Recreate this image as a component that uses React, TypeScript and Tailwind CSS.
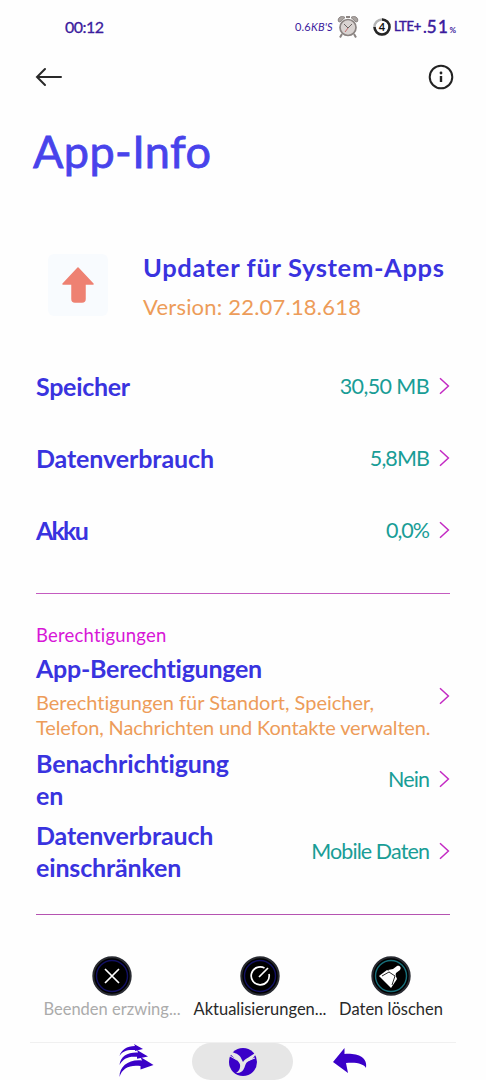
import React from 'react';

interface RowProps {
  title: string;
  value: string;
  titleClass?: string;
  valueClass?: string;
}

// small magenta chevron on the right side of every row
function Chevron() {
  return (
    <svg className="h-[18px] w-[11px] shrink-0" viewBox="0 0 11 18" fill="none" stroke="#c32ac3" strokeWidth="1.5">
      <path d="M1 1.2 9.4 9 1 16.8" />
    </svg>
  );
}

function Row({ title, value, titleClass = '', valueClass = '' }: RowProps) {
  return (
    <div className="flex h-[72px] items-center justify-between">
      <div className={`w-[201px] text-[25px] leading-8 font-bold wrap-break-word text-[#3933df] ${titleClass}`}>{title}</div>
      <div className="flex items-center gap-2.5">
        <div className={`text-[21.5px] leading-8 whitespace-nowrap text-[#199d96] ${valueClass}`}>{value}</div>
        <Chevron />
      </div>
    </div>
  );
}

function AlarmIcon() {
  return (
    <svg className="h-[24px] w-[22px]" viewBox="0 0 22 24" fill="none" stroke="#8b8482">
      <path d="M1.5 6.5C0 2.5 5 0 8 2.5L3 7ZM20.5 6.5C22 2.5 17 0 14 2.5L19 7Z" fill="#aaa4a1" />
      <path d="M5 19 3 22.5M17 19 19 22.5M9 2h4" strokeWidth="2" />
      <circle cx="11" cy="12.5" r="8" fill="#d9d3d1" strokeWidth="1.7" />
      <path d="m7 9 4 4 4-4" stroke="#6b6463" />
      <path d="m11 13-3 4" stroke="#c46c6c" />
    </svg>
  );
}

function StatusBar() {
  return (
    <div className="flex h-[54px] items-center text-[#3b1b9d]">
      <div className="w-[229px] pl-[35px] text-[16px] tracking-[-0.5px] [-webkit-text-stroke:0.3px]">00:12</div>
      <div className="flex w-[42px] items-center pl-9 text-[11px] tracking-[0.2px] whitespace-nowrap">
        0.6<span className="italic">KB'S</span>
      </div>
      <div className="ml-[36px] flex">
        <AlarmIcon />
      </div>
      <svg className="ml-[14px] h-[18px] w-[18px]" viewBox="0 0 18 18" fill="none">
        <circle cx="9" cy="9" r="7.5" stroke="#b4b4b4" strokeWidth="2.5" />
        <path d="M9 1.5A7.5 7.5 0 1 1 1.5 9" stroke="#252525" strokeWidth="2.5" />
        <text x="9" y="13" textAnchor="middle" fill="#111" fontSize="11" fontWeight="bold">4</text>
      </svg>
      <div className="ml-[3px] text-[13px] tracking-[-0.3px] whitespace-nowrap [-webkit-text-stroke:0.5px]">LTE+</div>
      <div className="ml-[2px] flex items-baseline whitespace-nowrap">
        <span className="text-[16px] font-bold">.</span>
        <span className="text-[17px] tracking-[1.5px] [-webkit-text-stroke:0.5px]">51</span>
        <span className="text-[8px] font-bold">%</span>
      </div>
    </div>
  );
}

interface ActionProps {
  label: string;
  className: string;
  ring: string;
  children: React.ReactNode;
}

function Action({ label, className, ring, children }: ActionProps) {
  return (
    <div className={`flex flex-col items-center ${className}`}>
      <svg className="h-10 w-10" viewBox="0 0 40 40" fill="none" stroke="#fff" strokeWidth="1.7">
        <circle cx="20" cy="20" r="18.7" fill="#000" stroke="#292b32" strokeWidth="2" />
        <circle cx="20" cy="20" r="15.5" stroke={ring} strokeWidth="1.4" />
        {children}
      </svg>
      <div className="mt-px text-[16.5px] leading-6 whitespace-nowrap">{label}</div>
    </div>
  );
}

function NavBar() {
  return (
    <div className="mx-[30px] flex h-[38px] border-t border-[#f0f0f0]">
      <svg className="mt-px ml-[88px] h-9 w-9" viewBox="0 0 36 36" fill="#3a00c8">
        <path d="M1.5 12C3 6 9 2 17 2L16 0l9 5-8 2V6C9 5.500 4.500 7 1.500 12Z" />
        <path d="M1.5 21C2.500 12 10 8 20 8.500L19 6l11 6.500-11 2.300v-2C10 12 5 14.500 1.500 21Z" />
        <path d="M1.5 33C1.500 22 11 15 24 16.500L22.500 13 35.500 21l-13 4.500v-3.500C12 20.500 4 24 1.500 33Z" />
      </svg>
      <div className="ml-[38px] flex h-[37px] w-[101px] items-center justify-center rounded-full bg-[#e6e6e6]">
        <svg className="h-[30px] w-[30px]" viewBox="0 0 30 30">
          <circle cx="15" cy="15" r="14" fill="#3a00c8" />
          <path d="M0 3.500C5 6 10 6 12.500 10l2.500 5c2-4 8-5 13-10-1 5-4 8-8 9.500-3 1.500-2.500 5-4.500 8-1.500 2.500-4 4-7.500 3.500 3.500-2 4.500-5.500 4-8.500C11 13 4 11 0 3.500Z" fill="#e6e6e6" />
          <path d="m2 9 7 4M19 14l8-3" stroke="#e6e6e6" strokeWidth="1" />
        </svg>
      </div>
      <svg className="mt-[5px] ml-[39px] h-[26px] w-9" viewBox="0 0 36 26" fill="#3a00c8">
        <path d="M1 14 12.500 0v6C25 5 36 9 34 20c-2-4-9-6-20-5l2 10Z" />
      </svg>
    </div>
  );
}

export default function App() {
  return (
    <div className="h-[1080px] w-[486px] overflow-hidden bg-[#fefefe] font-['Lato','Noto_Sans',sans-serif] [font-variant-ligatures:none]">
      <div className="px-[30px]">
        <StatusBar />
      </div>
      <div className="flex h-[45px] items-center justify-between pr-8 pl-[35px]">
        <svg className="h-[20px] w-[28px]" viewBox="0 0 28 20" fill="none" stroke="#292929" strokeWidth="2" strokeLinecap="round">
          <path d="M26 10H2M10 2 2 10l8 8" />
        </svg>
        <svg className="h-[26px] w-[26px]" viewBox="0 0 26 26" fill="none" stroke="#222">
          <circle cx="13" cy="13" r="11.3" strokeWidth="2" />
          <path d="M13 12v6" strokeWidth="2.4" />
          <circle cx="13" cy="9" r="1.4" fill="#222" stroke="none" />
        </svg>
      </div>
      <h1 className="h-[155px] pt-[25px] pl-[33px] text-[45px] leading-[54px] tracking-[0.4px] text-[#4843eb] [-webkit-text-stroke:0.8px]">App-Info</h1>

      <div className="flex h-[96px] pl-12">
        <div className="flex h-[62px] w-[60px] items-center justify-center rounded-md bg-[#f8fbfe]">
          <svg className="h-9 w-8" viewBox="0 0 32 36" fill="#ee8172" stroke="#ee8172" strokeWidth="1.5" strokeLinejoin="round">
            <path d="M16 1 31 17H23V32q0 3-3 3h-7q-3 0-3-3V17H1Z" />
          </svg>
        </div>
        <div className="-mt-[5px] ml-[35px]">
          <div className="text-[25.5px] leading-9 font-bold tracking-[0.65px] whitespace-nowrap text-[#3933df]">Updater für System-Apps</div>
          <div className="mt-1 text-[22px] leading-9 tracking-[0.2px] whitespace-nowrap text-[#ed9c59]">Version: 22.07.18.618</div>
        </div>
      </div>

      <div className="mx-9">
        <Row title="Speicher" value="30,50 MB" titleClass="tracking-[-0.3px]" valueClass="tracking-[-0.6px]" />
        <Row title="Datenverbrauch" value="5,8MB" titleClass="tracking-[-0.1px]" valueClass="tracking-[-0.9px]" />
        <Row title="Akku" value="0,0%" titleClass="tracking-[-1.8px]" valueClass="tracking-[-1px]" />
        <div className="mt-[27px] h-px bg-[#c45bc0]" />
        <div className="mt-[27px] text-[18.5px] leading-7 tracking-[0.2px] text-[#d716d7]">Berechtigungen</div>
        <div className="flex h-[94px] items-center justify-between">
          <div className="w-[403px] pb-[3px]">
            <div className="text-[25px] leading-9 font-bold tracking-[-0.25px] text-[#3933df]">App-Berechtigungen</div>
            <div className="mt-1 text-[20px] leading-[25px] whitespace-nowrap text-[#ed9c59]">
              <div>Berechtigungen für Standort, Speicher,</div>
              <div className="tracking-[-0.15px]">Telefon, Nachrichten und Kontakte verwalten.</div>
            </div>
          </div>
          <Chevron />
        </div>
        <Row title="Benachrichtigungen" value="Nein" titleClass="tracking-[-0.1px]" valueClass="tracking-[-0.9px]" />
        <Row title="Datenverbrauch einschränken" value="Mobile Daten" titleClass="tracking-[-0.15px]" valueClass="tracking-[-0.9px]" />
        <div className="mt-[27px] h-px bg-[#b553b1]" />
      </div>

      <div className="mt-[41px] flex h-[86px] pl-[38px]">
        <Action label="Beenden erzwing..." className="w-[148px] text-[#ababab]" ring="#121063">
          <path d="m13 13 14 14M27 13 13 27" />
        </Action>
        <Action label="Aktualisierungen..." className="w-[148px] text-[#292929]" ring="#121063">
          <path d="M24.5 12A9 9 0 1 0 29 18M19 21l9-9" />
        </Action>
        <Action label="Daten löschen" className="w-[114px] text-[#292929]" ring="#176e7a">
          <path d="m8 20 8-6 8 4 2 5-6 9Z" fill="#fff" stroke="none" />
          <path d="m17 14 5-1 4-3c2-1 5 1 3 4l-4 3-1 4Z" fill="#fff" stroke="none" />
          <path d="m11 20 7-4 6 4-3 9" stroke="#111" strokeWidth=".9" />
        </Action>
      </div>
      <NavBar />
    </div>
  );
}
